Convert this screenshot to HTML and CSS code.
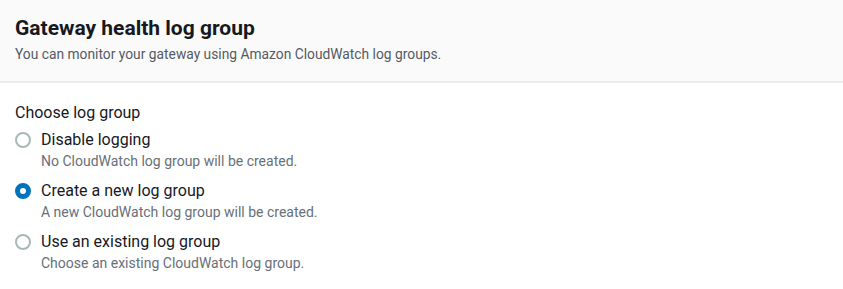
FILE: index.html
```html
<!DOCTYPE html>
<html>
<head>
<meta charset="utf-8">
<link rel="stylesheet" href="styles.css">
</head>
<body>
<div class="panel">
  <div class="header">
    <h2 class="title">Gateway health log group</h2>
    <p class="desc">You can monitor your gateway using Amazon CloudWatch log groups.</p>
  </div>
  <div class="content">
    <div class="field-label">Choose log group</div>
    <div class="options">
      <label class="option">
        <span class="radio"></span>
        <span class="text">
          <span class="opt-label">Disable logging</span>
          <span class="opt-desc">No CloudWatch log group will be created.</span>
        </span>
      </label>
      <label class="option">
        <span class="radio checked"></span>
        <span class="text">
          <span class="opt-label">Create a new log group</span>
          <span class="opt-desc">A new CloudWatch log group will be created.</span>
        </span>
      </label>
      <label class="option">
        <span class="radio"></span>
        <span class="text">
          <span class="opt-label">Use an existing log group</span>
          <span class="opt-desc">Choose an existing CloudWatch log group.</span>
        </span>
      </label>
    </div>
  </div>
</div>
</body>
</html>
```
FILE: styles.css
```css
* { box-sizing: border-box; }
html, body { margin: 0; padding: 0; background: #ffffff; }
body { font-family: "Roboto", "Noto Sans", sans-serif; color: #16191f; }
.panel { width: 843px; height: 289px; }
.header {
  background: #fafafa;
  border-bottom: 2px solid #eaeded;
  padding: 14px 15px 0 15px;
  height: 83px;
}
.title {
  margin: 0;
  font-size: 21px;
  font-weight: 700;
  line-height: 28px;
  color: #16191f;
}
.desc {
  margin: 2px 0 0 0;
  font-size: 13.8px;
  line-height: 20px;
  color: #545b64;
}
.content { padding: 19px 15px 0 15px; }
.field-label { font-size: 16px; line-height: 22px; color: #16191f; }
.options { display: flex; flex-direction: column; gap: 9px; margin-top: 5px; }
.option { display: flex; align-items: flex-start; gap: 10px; }
.radio {
  width: 16px; height: 16px; border-radius: 50%;
  border: 2px solid #aab7b8; background: #fff;
  margin-top: 3px; flex: none;
}
.radio.checked { border: 5px solid #0073bb; }
.text { display: flex; flex-direction: column; }
.opt-label { font-size: 16px; line-height: 22px; color: #16191f; }
.opt-desc { font-size: 14px; line-height: 20px; color: #687078; }
```
